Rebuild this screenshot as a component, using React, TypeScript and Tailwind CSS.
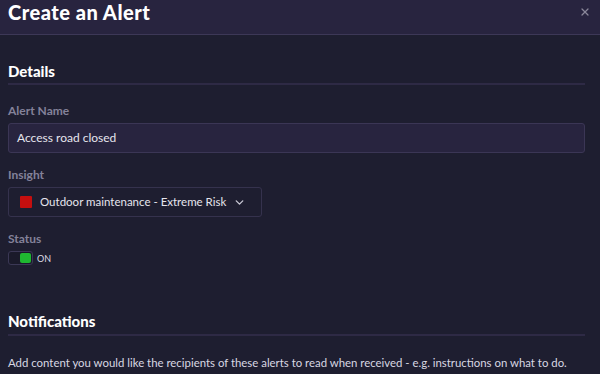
import { ChevronDown, X } from "lucide-react";

export default function App() {
  return (
    <div
      className="w-[600px] h-[374px] overflow-hidden bg-[#1e1e30] text-white"
      style={{ fontFamily: "Lato, 'Noto Sans', sans-serif" }}
    >
      {/* Header */}
      <div className="h-[35px] bg-[#28243f] border-b border-[#3d3857] flex items-start justify-between pl-2 pr-[9px]">
        <h1 className="text-[20px] font-black leading-none mt-[2px] tracking-[0.5px]">Create an Alert</h1>
        <X className="mt-[6px] text-[#8a8799]" size={12} strokeWidth={2.5} />
      </div>

      <div className="px-2 pr-[15px]">
        {/* Details */}
        <div className="pt-[29px]">
          <h2 className="text-[15px] font-black leading-none pb-[4px] border-b-2 border-[#2e2a45]">Details</h2>
        </div>

        <div className="mt-[20px]">
          <label className="block text-[12px] font-bold text-[#84829a] leading-none">Alert Name</label>
          <div className="mt-[6px] h-[30px] w-[577px] bg-[#28243f] border border-[#3b3655] rounded-[3px] flex items-center pl-[8px] text-[12px] text-[#e6e5ee]">
            Access road closed
          </div>
        </div>

        <div className="mt-[16px]">
          <label className="block text-[12px] font-bold text-[#84829a] leading-none">Insight</label>
          <div className="mt-[6px] h-[30px] w-[254px] border border-[#35324d] rounded-[3px] flex items-center pl-[11px] pr-[15px] text-[11.5px] text-[#e6e5ee] whitespace-nowrap">
            <span className="w-[12px] h-[12px] shrink-0 bg-[#c50f0f] rounded-[1px]" />
            <span className="ml-[8px]">Outdoor maintenance - Extreme Risk</span>
            <ChevronDown className="ml-auto text-[#c9c8d4]" size={13} strokeWidth={2.5} />
          </div>
        </div>

        <div className="mt-[16px]">
          <label className="block text-[12px] font-bold text-[#84829a] leading-none">Status</label>
          <div className="mt-[6px] flex items-center">
            <div className="w-[25px] h-[14px] rounded-[3px] border border-[#3b3855] bg-[#1a1a2a] flex items-center justify-end pr-[1px]">
              <span className="w-[11px] h-[10px] bg-[#1fb831] rounded-[2px]" />
            </div>
            <span className="ml-[4px] text-[9px] text-[#dcdbe4] leading-none">ON</span>
          </div>
        </div>

        {/* Notifications */}
        <div className="pt-[49px]">
          <h2 className="text-[15px] font-black leading-none pb-[5px] border-b-2 border-[#2e2a45]">Notifications</h2>
        </div>
        <p className="mt-[21px] text-[11.4px] text-[#d8d7e2] leading-none whitespace-nowrap">
          Add content you would like the recipients of these alerts to read when received - e.g. instructions on what to do.
        </p>
      </div>
    </div>
  );
}
